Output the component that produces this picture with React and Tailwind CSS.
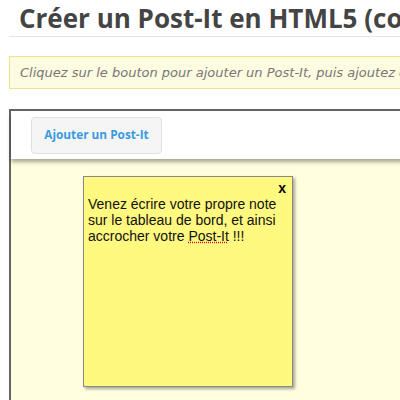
import React from "react";

const App = () => {
    return (
        <div className="w-[400px] h-[400px] overflow-hidden bg-white" style={{ fontFamily: '"Open Sans", sans-serif' }}>
            <div className="w-[560px] pl-[9px]">
                {/* Title */}
                <h1 className="pl-[10px] pt-[1px] h-[36px] text-[26px] leading-[34px] font-bold text-[#444] whitespace-nowrap">
                    Créer un Post-It en HTML5 (complément)
                </h1>
                <div className="h-px bg-[#e5e5e5]" />

                {/* Info box */}
                <div className="mt-[19px] h-[33px] flex items-center pl-[10px] bg-[#fdfbe0] border border-[#eee38a]">
                    <p className="text-[13px] italic text-[#777] whitespace-nowrap" style={{ fontFamily: '"DejaVu Sans", sans-serif' }}>
                        Cliquez sur le bouton pour ajouter un Post-It, puis ajoutez du texte dedans.
                    </p>
                </div>

                {/* Board */}
                <div className="mt-[20px] h-[400px] border-l-2 border-t-2 border-[#666] bg-[#fffedf]">
                    <div className="h-[48px] bg-white flex items-center pl-[20px] shadow-[0_3px_4px_rgba(0,0,0,0.35)] relative">
                        <button className="w-[131px] h-[37px] rounded-[4px] bg-[#f5f5f5] border border-[#e0e0e0] text-[11.8px] font-bold text-[#3a9ae0]">
                            Ajouter un Post-It
                        </button>
                    </div>

                    <div className="pt-[17px] pl-[72px]">
                        <div className="w-[210px] h-[211px] bg-[#fff980] border border-[#888] shadow-[2px_2px_3px_rgba(0,0,0,0.35)] pl-[4px] pr-[2px] pt-[4px]" style={{ fontFamily: '"Liberation Sans", Arial, sans-serif' }}>
                            <div className="flex justify-end pr-[4px] h-[15px]">
                                <span className="text-[14px] font-bold leading-[14px] text-black">x</span>
                            </div>
                            <p className="text-[14px] leading-[16px] text-[#111]">
                                Venez écrire votre propre note sur le tableau de bord, et ainsi accrocher votre{" "}
                                <span className="underline decoration-dotted decoration-red-600">Post-It</span> !!!
                            </p>
                        </div>
                    </div>
                </div>
            </div>
        </div>
    );
};

export default App;
